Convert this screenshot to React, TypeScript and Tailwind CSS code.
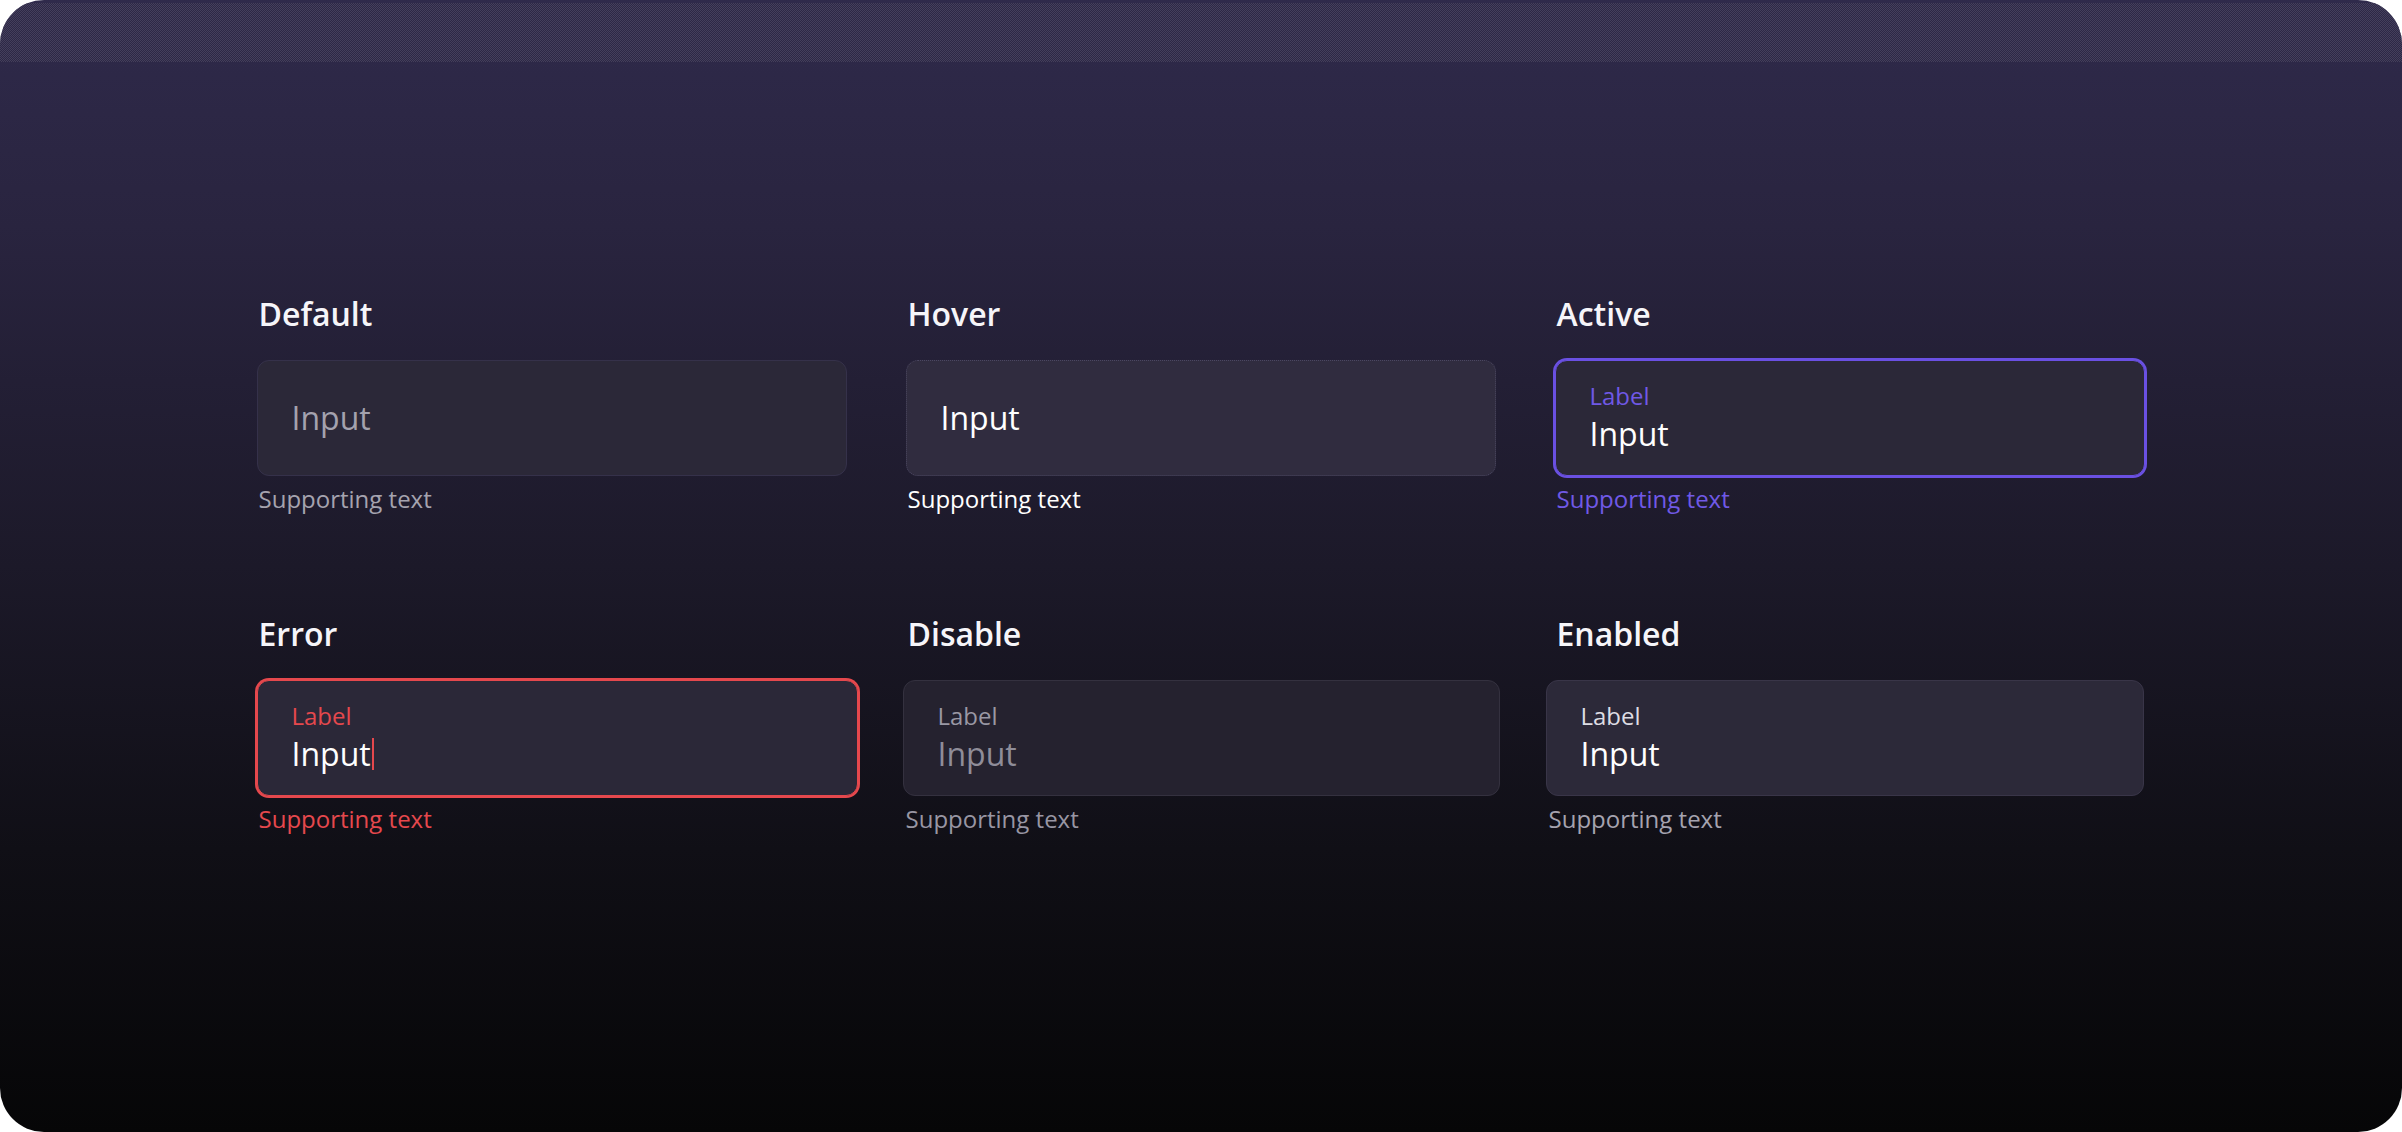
import React from "react";

type FieldProps = {
  title: string;
  label?: string;
  value: string;
  boxClass: string;
  labelClass?: string;
  valueClass: string;
  helpClass: string;
  cursor?: boolean;
};

function Field({ title, label, value, boxClass, labelClass, valueClass, helpClass, cursor }: FieldProps) {
  return (
    <div className="flex flex-col">
      <h3 className="pl-[2px] text-[32px] leading-none font-semibold text-[#f6f5f9]">{title}</h3>
      <div
        className={`mt-[30px] h-[116px] rounded-[12px] border flex flex-col pl-[34px] ${
          label ? "pt-[23px]" : "justify-center"
        } ${boxClass}`}
      >
        {label && <span className={`text-[24px] leading-none mb-[10px] ${labelClass}`}>{label}</span>}
        <div className={`flex text-[32px] leading-none ${valueClass}`}>
          <span>{value}</span>
          {cursor && <span className="ml-[1px] w-[2px] self-stretch bg-[#e5484d]" />}
        </div>
      </div>
      <p className={`mt-[11px] pl-[2px] text-[24px] leading-none ${helpClass}`}>Supporting text</p>
    </div>
  );
}

export default function App() {
  return (
    <div className="w-full h-[1132px] bg-white" style={{ fontFamily: '"Open Sans", "Noto Sans", sans-serif' }}>
      <div className="h-full rounded-[44px] overflow-hidden flex flex-col bg-[linear-gradient(180deg,#2f2a4b_0%,#29243f_20%,#1c1929_50%,#100f16_75%,#060607_100%)]">
        {/* dithered strip along the top edge */}
        <div className="mt-[3px] h-[59px] bg-[repeating-conic-gradient(#4e4964_0_25%,#2c2744_0_50%)] bg-[length:2px_2px] opacity-70" />

        <div className="mt-[236px] flex justify-center pr-[1px]">
          <div className="grid grid-cols-[repeat(3,590px)] gap-x-[59px] gap-y-[107px]">
            <Field
              title="Default"
              value="Input"
              boxClass="bg-[#2b2838] border-[#35314a]"
              valueClass="text-[#a4a2ae]"
              helpClass="text-[#a5a3af]"
            />
            <Field
              title="Hover"
              value="Input"
              boxClass="bg-[#302c3f] border-dotted border-[#4b4762]"
              valueClass="text-white"
              helpClass="text-white"
            />
            <Field
              title="Active"
              label="Label"
              value="Input"
              boxClass="bg-[#2b2838] border-[#6a50e2] ring-2 ring-[#6a50e2]"
              labelClass="text-[#7059e6]"
              valueClass="text-white"
              helpClass="text-[#7059e6]"
            />
            <Field
              title="Error"
              label="Label"
              value="Input"
              cursor
              boxClass="w-[601px] bg-[#2b2838] border-[#e5484d] ring-2 ring-[#e5484d]"
              labelClass="text-[#e5484d]"
              valueClass="text-white"
              helpClass="text-[#e5484d]"
            />
            <Field
              title="Disable"
              label="Label"
              value="Input"
              boxClass="-ml-[3px] w-[597px] bg-[#25222f] border-[#34313f]"
              labelClass="text-[#9a98a4]"
              valueClass="text-[#8f8d99]"
              helpClass="-ml-[2px] text-[#9896a3]"
            />
            <Field
              title="Enabled"
              label="Label"
              value="Input"
              boxClass="-ml-[9px] w-[598px] bg-[#2c2939] border-[#393548]"
              labelClass="text-[#dedde4]"
              valueClass="text-white"
              helpClass="-ml-[8px] text-[#a5a3af]"
            />
          </div>
        </div>
      </div>
    </div>
  );
}
